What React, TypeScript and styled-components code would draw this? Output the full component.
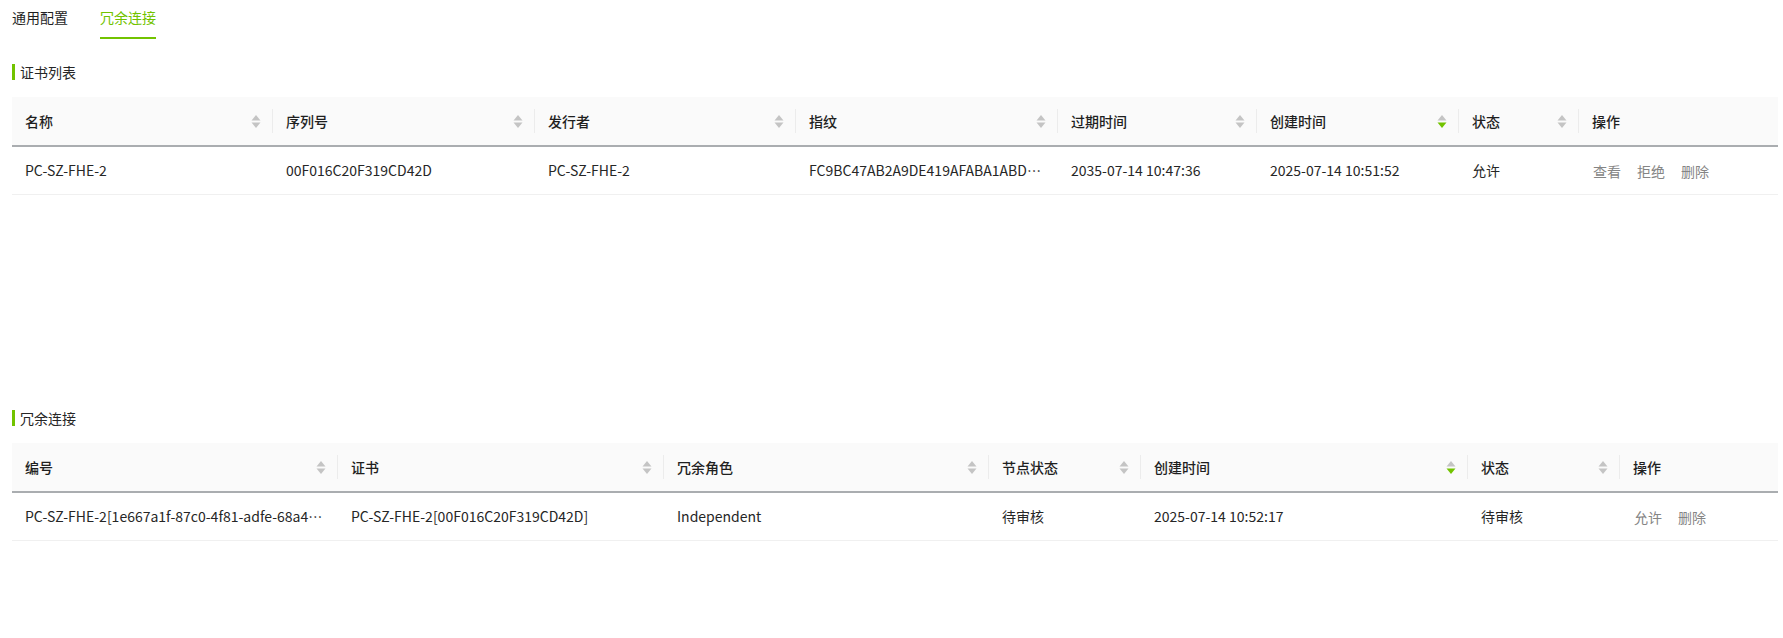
import React from "react";
import styled, { createGlobalStyle } from "styled-components";

const GREEN = "#72c300";

const GlobalStyle = createGlobalStyle`
    * {
        box-sizing: border-box;
    }
    body {
        margin: 0;
        background: #ffffff;
        font-family: "Noto Sans CJK SC", "Noto Sans", sans-serif;
        font-size: 14px;
        color: #262626;
    }
`;

type Column = { title: string; sort?: "none" | "desc"; width: number };

const certColumns: Column[] = [
    { title: "名称", sort: "none", width: 261 },
    { title: "序列号", sort: "none", width: 262 },
    { title: "发行者", sort: "none", width: 261 },
    { title: "指纹", sort: "none", width: 262 },
    { title: "过期时间", sort: "none", width: 199 },
    { title: "创建时间", sort: "desc", width: 202 },
    { title: "状态", sort: "none", width: 120 },
    { title: "操作", width: 199 },
];

const certRows = [
    {
        cells: [
            "PC-SZ-FHE-2",
            "00F016C20F319CD42D",
            "PC-SZ-FHE-2",
            "FC9BC47AB2A9DE419AFABA1ABD5E07C3",
            "2035-07-14 10:47:36",
            "2025-07-14 10:51:52",
            "允许",
        ],
        actions: ["查看", "拒绝", "删除"],
    },
];

const linkColumns: Column[] = [
    { title: "编号", sort: "none", width: 326 },
    { title: "证书", sort: "none", width: 326 },
    { title: "冗余角色", sort: "none", width: 325 },
    { title: "节点状态", sort: "none", width: 152 },
    { title: "创建时间", sort: "desc", width: 327 },
    { title: "状态", sort: "none", width: 152 },
    { title: "操作", width: 158 },
];

const linkRows = [
    {
        cells: [
            "PC-SZ-FHE-2[1e667a1f-87c0-4f81-adfe-68a4c91d20b7]",
            "PC-SZ-FHE-2[00F016C20F319CD42D]",
            "Independent",
            "待审核",
            "2025-07-14 10:52:17",
            "待审核",
        ],
        actions: ["允许", "删除"],
    },
];

const SortIcon = ({ active }: { active?: boolean }) => {
    return (
        <SortBox>
            <svg width="10" height="15" viewBox="0 0 10 15">
                <path d="M5 1 L9.5 6.5 L0.5 6.5 Z" fill="#c4c4c4" />
                <path
                    d="M5 14 L9.5 8.5 L0.5 8.5 Z"
                    fill={active ? GREEN : "#c4c4c4"}
                />
            </svg>
        </SortBox>
    );
};

const DataTable = (props: {
    columns: Column[];
    rows: { cells: string[]; actions: string[] }[];
    minHeight: number;
}) => {
    const template = props.columns.map((c) => `${c.width}px`).join(" ");
    return (
        <TableWrap minHeight={props.minHeight}>
            <HeadRow cols={template}>
                {props.columns.map((col, index) => (
                    <HeadCell key={index} last={index === props.columns.length - 1}>
                        <HeadLabel>{col.title}</HeadLabel>
                        {col.sort && <SortIcon active={col.sort === "desc"} />}
                    </HeadCell>
                ))}
            </HeadRow>
            {props.rows.map((row, rIndex) => (
                <BodyRow key={rIndex} cols={template}>
                    {row.cells.map((cell, cIndex) => (
                        <BodyCell key={cIndex}>{cell}</BodyCell>
                    ))}
                    <ActionCell>
                        {row.actions.map((action, aIndex) => (
                            <ActionLink key={aIndex}>{action}</ActionLink>
                        ))}
                    </ActionCell>
                </BodyRow>
            ))}
        </TableWrap>
    );
};

const App = () => {
    return (
        <>
            <GlobalStyle />
            <Page>
                <Tabs>
                    <Tab>通用配置</Tab>
                    <Tab active>冗余连接</Tab>
                </Tabs>
                <Section>
                    <SectionTitle>证书列表</SectionTitle>
                    <DataTable
                        columns={certColumns}
                        rows={certRows}
                        minHeight={313}
                    />
                </Section>
                <Section>
                    <SectionTitle>冗余连接</SectionTitle>
                    <DataTable
                        columns={linkColumns}
                        rows={linkRows}
                        minHeight={98}
                    />
                </Section>
            </Page>
        </>
    );
};

const Page = styled.div`
    width: 1783px;
    padding: 0 5px 0 12px;
    display: flex;
    flex-direction: column;
`;

const Tabs = styled.div`
    display: flex;
    gap: 32px;
    height: 39px;
    margin-bottom: 25px;
`;

const Tab = styled.div<{ active?: boolean }>`
    height: 39px;
    padding-top: 6px;
    font-size: 14px;
    line-height: 22px;
    color: ${(props) => (props.active ? GREEN : "#1f1f1f")};
    border-bottom: 2px solid
        ${(props) => (props.active ? GREEN : "transparent")};
    cursor: pointer;
`;

const Section = styled.div`
    display: flex;
    flex-direction: column;
    gap: 17px;
`;

const SectionTitle = styled.div`
    height: 16px;
    display: flex;
    align-items: center;
    gap: 5px;
    font-size: 14px;
    color: #262626;
    &::before {
        content: "";
        display: block;
        width: 3px;
        height: 16px;
        background: ${GREEN};
    }
`;

const TableWrap = styled.div<{ minHeight: number }>`
    width: 1766px;
    min-height: ${(props) => props.minHeight}px;
`;

const HeadRow = styled.div<{ cols: string }>`
    display: grid;
    grid-template-columns: ${(props) => props.cols};
    height: 50px;
    background: #fafafa;
    border-bottom: 2px solid #aaadb0;
`;

const HeadCell = styled.div<{ last?: boolean }>`
    position: relative;
    display: flex;
    align-items: center;
    justify-content: space-between;
    padding: 0 12px 0 13px;
    font-weight: 500;
    color: #1f1f1f;
    &::after {
        content: "";
        display: ${(props) => (props.last ? "none" : "block")};
        position: absolute;
        right: 0;
        top: 50%;
        width: 1px;
        height: 24px;
        transform: translateY(-50%);
        background: #ececec;
    }
`;

const HeadLabel = styled.span`
    white-space: nowrap;
`;

const SortBox = styled.span`
    display: flex;
    align-items: center;
`;

const BodyRow = styled.div<{ cols: string }>`
    display: grid;
    grid-template-columns: ${(props) => props.cols};
    height: 48px;
    border-bottom: 1px solid #f0f0f0;
`;

const BodyCell = styled.div`
    padding: 0 14px 0 13px;
    min-width: 0;
    line-height: 47px;
    color: #262626;
    white-space: nowrap;
    overflow: hidden;
    text-overflow: ellipsis;
`;

const ActionCell = styled.div`
    display: flex;
    align-items: center;
    gap: 16px;
    padding: 0 14px;
`;

const ActionLink = styled.span`
    color: #858585;
    cursor: pointer;
    &:hover {
        color: ${GREEN};
    }
`;

export default App;
